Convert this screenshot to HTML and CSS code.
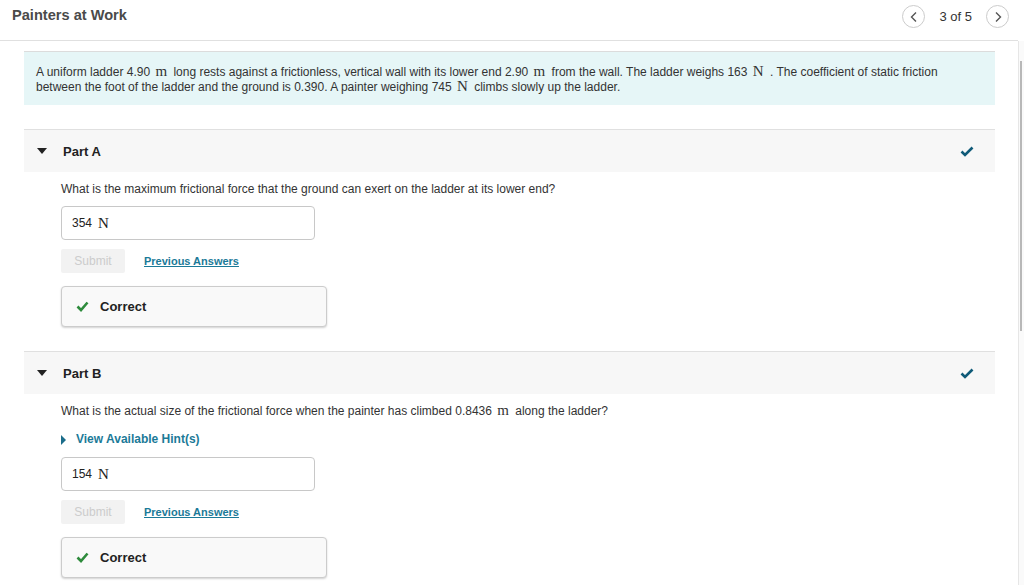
FILE: index.html
```html
<!DOCTYPE html>
<html>
<head>
<meta charset="utf-8">
<link rel="stylesheet" href="styles.css">
</head>
<body>
<div class="page">
  <header class="topbar">
    <h1 class="title">Painters at Work</h1>
    <nav class="pager">
      <span class="circ"><svg width="10" height="12" viewBox="0 0 10 12"><path d="M7 1.5 L2.5 6 L7 10.5" fill="none" stroke="#555" stroke-width="1.4"/></svg></span>
      <span class="count">3 of 5</span>
      <span class="circ"><svg width="10" height="12" viewBox="0 0 10 12"><path d="M3 1.5 L7.5 6 L3 10.5" fill="none" stroke="#555" stroke-width="1.4"/></svg></span>
    </nav>
  </header>
  <div class="scroller">
    <main class="content">
      <div class="problem">A uniform ladder 4.90 <span class="m">m</span> long rests against a frictionless, vertical wall with its lower end 2.90 <span class="m">m</span> from the wall. The ladder weighs 163 <span class="m">N</span> . The coefficient of static friction between the foot of the ladder and the ground is 0.390. A painter weighing 745 <span class="m">N</span> climbs slowly up the ladder.</div>

      <section class="part">
        <div class="part-head">
          <span class="tri"></span><span class="part-name">Part A</span>
          <svg class="done" width="14" height="11" viewBox="0 0 14 11"><path d="M1.5 5.5 L5 9 L12.5 1.5" fill="none" stroke="#0f5a78" stroke-width="2.6"/></svg>
        </div>
        <div class="part-body">
          <p class="q">What is the maximum frictional force that the ground can exert on the ladder at its lower end?</p>
          <div class="answer">354 <span class="m">N</span></div>
          <div class="actions"><span class="submit">Submit</span><a class="prev">Previous Answers</a></div>
          <div class="correct"><svg width="13" height="11" viewBox="0 0 13 11"><path d="M1.5 5.5 L5 9 L11.5 1.5" fill="none" stroke="#2e8b3c" stroke-width="2.6"/></svg><span>Correct</span></div>
        </div>
      </section>

      <section class="part">
        <div class="part-head">
          <span class="tri"></span><span class="part-name">Part B</span>
          <svg class="done" width="14" height="11" viewBox="0 0 14 11"><path d="M1.5 5.5 L5 9 L12.5 1.5" fill="none" stroke="#0f5a78" stroke-width="2.6"/></svg>
        </div>
        <div class="part-body">
          <p class="q">What is the actual size of the frictional force when the painter has climbed 0.8436 <span class="m">m</span> along the ladder?</p>
          <div class="hint"><span class="tri-r"></span>View Available Hint(s)</div>
          <div class="answer">154 <span class="m">N</span></div>
          <div class="actions"><span class="submit">Submit</span><a class="prev">Previous Answers</a></div>
          <div class="correct"><svg width="13" height="11" viewBox="0 0 13 11"><path d="M1.5 5.5 L5 9 L11.5 1.5" fill="none" stroke="#2e8b3c" stroke-width="2.6"/></svg><span>Correct</span></div>
        </div>
      </section>
    </main>
    <div class="sbar"><div class="thumb"></div></div>
  </div>
</div>
</body>
</html>
```
FILE: styles.css
```css
* { box-sizing: border-box; }
html, body { margin: 0; padding: 0; height: 100%; overflow: hidden; }
body {
  font-family: "Liberation Sans", Arial, sans-serif;
  font-size: 12px;
  color: #333;
  background: #fff;
}
.page { display: flex; flex-direction: column; height: 585px; }
.topbar {
  height: 41px;
  flex: none;
  display: flex;
  align-items: flex-start;
  justify-content: space-between;
  padding: 0 9px 0 12px;
  border-bottom: 1px solid #e0e0e0;
  margin-right: 6px;
}
.title {
  margin: 0;
  padding-top: 6px;
  font-size: 14.6px;
  font-weight: bold;
  color: #4a4a4a;
  line-height: 19px;
}
.pager { display: flex; align-items: center; padding-top: 5px; }
.circ {
  width: 23px; height: 23px;
  border: 1px solid #ccc;
  border-radius: 50%;
  display: flex; align-items: center; justify-content: center;
}
.count { font-size: 13px; color: #333; margin: 0 14px 0 14px; }
.scroller { flex: 1; display: flex; min-height: 0; }
.content { flex: 1; padding: 10px 23px 0 24px; }
.sbar { width: 6px; border-left: 1px solid #e6e6e6; background: #fafafa; position: relative; }
.thumb { position: absolute; left: 1px; top: 20px; width: 2px; height: 270px; background: #b8b8b8; }
.problem {
  background: #e6f6f7;
  border-top: 1px solid #dcdcdc;
  padding: 13px 12px 9px 12px;
  line-height: 15px;
  color: #333;
  min-height: 54px;
}
.m {
  display: inline-block;
  font-family: "Liberation Serif", "Times New Roman", serif;
  font-size: 15px;
  line-height: 13px;
  margin: 0 3px 0 2px;
}
.part { margin-top: 24px; }
.part + .part { margin-top: 24px; }
.part-head {
  height: 43px;
  background: #f7f7f7;
  border-top: 1px solid #e0e0e0;
  display: flex;
  align-items: center;
  padding: 0 21px 0 13px;
}
.tri {
  width: 0; height: 0;
  border-left: 5px solid transparent;
  border-right: 5px solid transparent;
  border-top: 6px solid #222;
  margin-right: 16px;
}
.part-name { font-weight: bold; font-size: 13px; color: #222; flex: 1; }
.part-body { padding: 0 37px; }
.q { margin: 0; padding-top: 10px; line-height: 15px; color: #333; }
.hint {
  margin-top: 13px;
  font-weight: bold;
  color: #1b7a98;
  display: flex;
  align-items: center;
  line-height: 15px;
}
.tri-r {
  width: 0; height: 0;
  border-top: 5px solid transparent;
  border-bottom: 5px solid transparent;
  border-left: 5px solid #1b6d8a;
  margin-right: 10px;
}
.answer {
  margin-top: 9px;
  width: 254px;
  height: 34px;
  border: 1px solid #c8c8c8;
  border-radius: 4px;
  padding: 0 10px;
  display: flex;
  align-items: center;
  font-size: 12px;
  color: #222;
}
.hint + .answer { margin-top: 10px; }
.answer .m { margin-left: 6px; line-height: 1; }
.actions { display: flex; align-items: center; margin-top: 9px; }
.submit {
  width: 64px; height: 24px;
  background: #f2f2f2;
  border-radius: 2px;
  color: #ccc;
  display: flex; align-items: center; justify-content: center;
  font-size: 12px;
}
.prev {
  margin-left: 19px;
  color: #1b7a98;
  font-weight: bold;
  font-size: 11px;
  text-decoration: underline;
}
.correct {
  margin-top: 13px;
  width: 266px;
  height: 41px;
  border: 1px solid #ccc;
  border-radius: 4px;
  background: #f9f9f9;
  box-shadow: 0 1px 2px rgba(0,0,0,0.18);
  display: flex;
  align-items: center;
  padding-left: 14px;
  font-weight: bold;
  font-size: 13px;
  color: #222;
}
.correct svg { margin-right: 11px; }
```
